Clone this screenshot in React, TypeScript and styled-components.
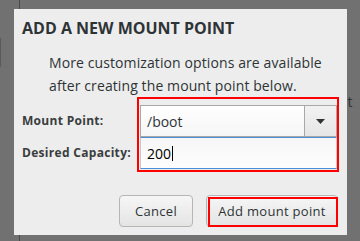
import React from "react";
import styled, { createGlobalStyle } from "styled-components";

const Global = createGlobalStyle`
  html, body { margin: 0; padding: 0; }
  body {
    width: 360px;
    height: 241px;
    overflow: hidden;
    background: #717171;
    font-family: "Open Sans", "DejaVu Sans", sans-serif;
  }
`;

const Backdrop = styled.div`
  position: relative;
  width: 360px;
  height: 241px;
  background: #717171;
  overflow: hidden;
`;

const BehindLine = styled.div`
  position: absolute;
  left: 19px;
  top: 0;
  bottom: 0;
  width: 1px;
  background: #4a4a4a;
`;

const BehindBar = styled.div`
  position: absolute;
  left: 0;
  top: 38px;
  width: 1px;
  height: 29px;
  background: #5a5a5a;
`;

const BehindText = styled.span`
  position: absolute;
  left: 339px;
  top: 92px;
  font-size: 14px;
  color: #2e3436;
`;

const Dialog = styled.div`
  position: absolute;
  left: 14px;
  top: 9px;
  width: 333px;
  height: 226px;
  box-sizing: border-box;
  background: #ededed;
  padding: 9px 9px 0 8px;
  display: flex;
  flex-direction: column;
  color: #2e3436;
`;

const Title = styled.h1`
  margin: 0;
  font-size: 16px;
  font-weight: 700;
  line-height: 20px;
  color: #2e3436;
`;

const Info = styled.p`
  margin: 13px 0 0 27px;
  font-size: 14px;
  letter-spacing: 0.1px;
  line-height: 23px;
  color: #2e3436;
`;

const Form = styled.div`
  margin-top: 0;
  display: grid;
  grid-template-columns: 115px 202px;
  align-items: end;
`;

const Labels = styled.div`
  display: flex;
  flex-direction: column;
  padding-bottom: 4px;
`;

const Label = styled.label`
  height: 32px;
  font-size: 12px;
  font-weight: 700;
  letter-spacing: 0.3px;
  color: #3a3d3e;
  display: flex;
  align-items: center;
`;

const Fields = styled.div`
  box-sizing: border-box;
  width: 202px;
  height: 75px;
  border: 2px solid #ff0000;
  padding: 6px 0 0 1px;
  display: flex;
  flex-direction: column;
`;

const Combo = styled.div`
  display: flex;
  height: 32px;
  box-sizing: border-box;
  border: 1px solid #a8a8a8;
  background: linear-gradient(#ffffff, #f6f6f6);
`;

const ComboText = styled.div`
  flex: 1;
  padding-left: 6px;
  font-size: 14px;
  display: flex;
  align-items: center;
  color: #2e3436;
`;

const ComboButton = styled.div`
  width: 31px;
  border-left: 1px solid #a8a8a8;
  display: flex;
  align-items: center;
  justify-content: center;
  background: linear-gradient(#f2f2f2, #e6e6e6);
`;

const Entry = styled.div`
  height: 32px;
  box-sizing: border-box;
  border: 1px solid #4a90d9;
  border-left-color: #c8c8c8;
  border-right-color: #c8c8c8;
  background: linear-gradient(#f6f6f6, #fdfdfd);
  padding-left: 6px;
  font-size: 14px;
  display: flex;
  align-items: center;
  color: #000;
`;

const Caret = styled.span`
  display: inline-block;
  width: 1px;
  height: 15px;
  background: #000;
  margin-left: 1px;
`;

const Buttons = styled.div`
  margin-top: auto;
  margin-bottom: 8px;
  display: flex;
  justify-content: flex-end;
  gap: 13px;
`;

const Button = styled.button<{ $width: number; $highlight?: boolean }>`
  position: relative;
  width: ${(p) => p.$width}px;
  height: 32px;
  box-sizing: border-box;
  border: 1px solid #b6b6b3;
  border-radius: 4px;
  background: linear-gradient(#f6f6f6, #e4e4e4);
  font-family: inherit;
  font-size: 13px;
  letter-spacing: 0.3px;
  color: #2e3436;
  padding: 0;

  &::after {
    content: "";
    display: ${(p) => (p.$highlight ? "block" : "none")};
    position: absolute;
    top: 1px;
    left: 1px;
    right: -1px;
    bottom: -1px;
    border: 2px solid #ff0000;
  }
`;

export default function App() {
  return (
    <>
      <Global />
      <Backdrop>
        <BehindLine />
        <BehindBar />
        <BehindText>nt</BehindText>
        <Dialog>
          <Title>ADD A NEW MOUNT POINT</Title>
          <Info>
            More customization options are available
            <br />
            after creating the mount point below.
          </Info>
          <Form>
            <Labels>
              <Label>Mount Point:</Label>
              <Label>Desired Capacity:</Label>
            </Labels>
            <Fields>
              <Combo>
                <ComboText>/boot</ComboText>
                <ComboButton>
                  <svg width="9" height="5" viewBox="0 0 9 5">
                    <path d="M0 0h9L4.5 5z" fill="#2e3436" />
                  </svg>
                </ComboButton>
              </Combo>
              <Entry>
                200
                <Caret />
              </Entry>
            </Fields>
          </Form>
          <Buttons>
            <Button $width={74}>Cancel</Button>
            <Button $width={132} $highlight>
              Add mount point
            </Button>
          </Buttons>
        </Dialog>
      </Backdrop>
    </>
  );
}
